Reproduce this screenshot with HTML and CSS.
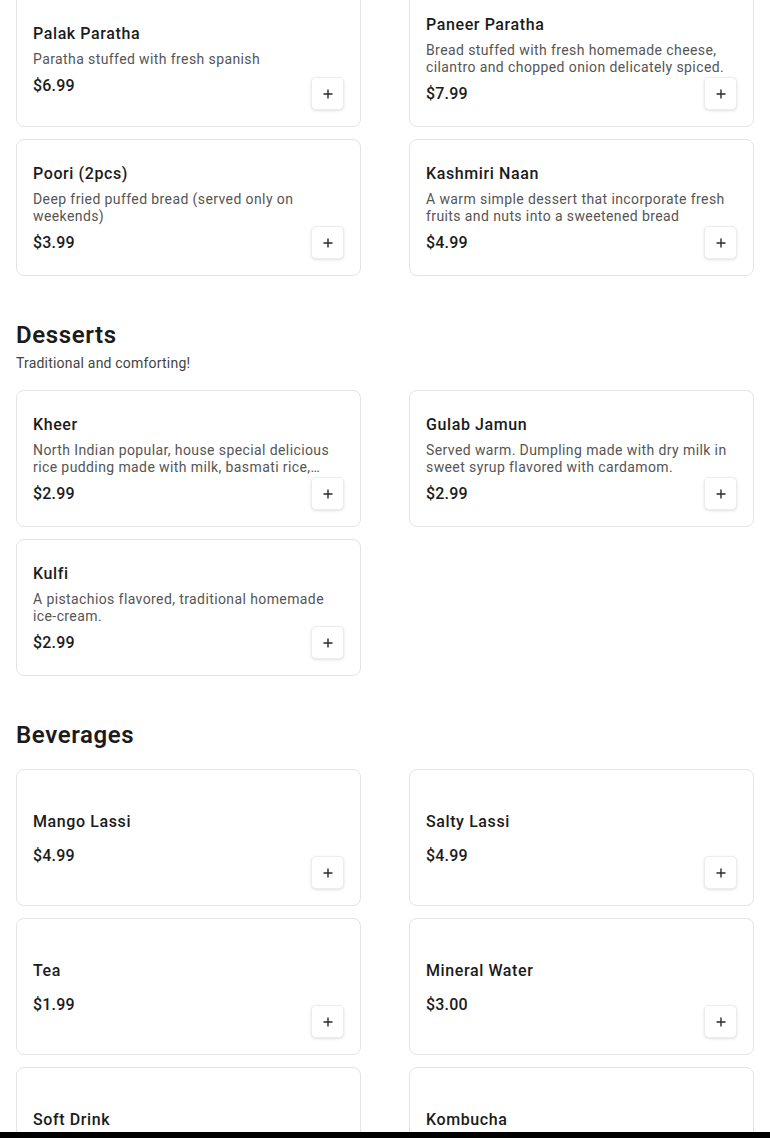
FILE: index.html
```html
<!DOCTYPE html>
<html lang="en">
<head>
<meta charset="utf-8">
<title>Menu</title>
<link rel="stylesheet" href="styles.css">
</head>
<body>
<main class="menu">
  <section class="section section-first">
    <div class="grid">
      <div class="card">
        <div class="info">
          <div class="name">Palak Paratha</div>
          <div class="desc">Paratha stuffed with fresh spanish</div>
          <div class="price">$6.99</div>
        </div>
        <button class="add" aria-label="Add"><svg viewBox="0 0 12 12" width="12" height="12"><path d="M6 1.5v9M1.5 6h9" stroke="#2a2a2a" stroke-width="1.4" fill="none"/></svg></button>
      </div>
      <div class="card">
        <div class="info">
          <div class="name">Paneer Paratha</div>
          <div class="desc">Bread stuffed with fresh homemade cheese, cilantro and chopped onion delicately spiced.</div>
          <div class="price">$7.99</div>
        </div>
        <button class="add" aria-label="Add"><svg viewBox="0 0 12 12" width="12" height="12"><path d="M6 1.5v9M1.5 6h9" stroke="#2a2a2a" stroke-width="1.4" fill="none"/></svg></button>
      </div>
      <div class="card">
        <div class="info">
          <div class="name">Poori (2pcs)</div>
          <div class="desc">Deep fried puffed bread (served only on weekends)</div>
          <div class="price">$3.99</div>
        </div>
        <button class="add" aria-label="Add"><svg viewBox="0 0 12 12" width="12" height="12"><path d="M6 1.5v9M1.5 6h9" stroke="#2a2a2a" stroke-width="1.4" fill="none"/></svg></button>
      </div>
      <div class="card">
        <div class="info">
          <div class="name">Kashmiri Naan</div>
          <div class="desc">A warm simple dessert that incorporate fresh fruits and nuts into a sweetened bread</div>
          <div class="price">$4.99</div>
        </div>
        <button class="add" aria-label="Add"><svg viewBox="0 0 12 12" width="12" height="12"><path d="M6 1.5v9M1.5 6h9" stroke="#2a2a2a" stroke-width="1.4" fill="none"/></svg></button>
      </div>
    </div>
  </section>

  <section class="section">
    <header class="section-head">
      <h2 class="section-title">Desserts</h2>
      <p class="section-sub">Traditional and comforting!</p>
    </header>
    <div class="grid">
      <div class="card">
        <div class="info">
          <div class="name">Kheer</div>
          <div class="desc">North Indian popular, house special delicious rice pudding made with milk, basmati rice, sugar, cardamom and nuts.</div>
          <div class="price">$2.99</div>
        </div>
        <button class="add" aria-label="Add"><svg viewBox="0 0 12 12" width="12" height="12"><path d="M6 1.5v9M1.5 6h9" stroke="#2a2a2a" stroke-width="1.4" fill="none"/></svg></button>
      </div>
      <div class="card">
        <div class="info">
          <div class="name">Gulab Jamun</div>
          <div class="desc">Served warm. Dumpling made with dry milk in sweet syrup flavored with cardamom.</div>
          <div class="price">$2.99</div>
        </div>
        <button class="add" aria-label="Add"><svg viewBox="0 0 12 12" width="12" height="12"><path d="M6 1.5v9M1.5 6h9" stroke="#2a2a2a" stroke-width="1.4" fill="none"/></svg></button>
      </div>
      <div class="card">
        <div class="info">
          <div class="name">Kulfi</div>
          <div class="desc">A pistachios flavored, traditional homemade ice-cream.</div>
          <div class="price">$2.99</div>
        </div>
        <button class="add" aria-label="Add"><svg viewBox="0 0 12 12" width="12" height="12"><path d="M6 1.5v9M1.5 6h9" stroke="#2a2a2a" stroke-width="1.4" fill="none"/></svg></button>
      </div>
    </div>
  </section>

  <section class="section">
    <header class="section-head">
      <h2 class="section-title">Beverages</h2>
    </header>
    <div class="grid">
      <div class="card">
        <div class="info">
          <div class="name">Mango Lassi</div>
          <div class="price">$4.99</div>
        </div>
        <button class="add" aria-label="Add"><svg viewBox="0 0 12 12" width="12" height="12"><path d="M6 1.5v9M1.5 6h9" stroke="#2a2a2a" stroke-width="1.4" fill="none"/></svg></button>
      </div>
      <div class="card">
        <div class="info">
          <div class="name">Salty Lassi</div>
          <div class="price">$4.99</div>
        </div>
        <button class="add" aria-label="Add"><svg viewBox="0 0 12 12" width="12" height="12"><path d="M6 1.5v9M1.5 6h9" stroke="#2a2a2a" stroke-width="1.4" fill="none"/></svg></button>
      </div>
      <div class="card">
        <div class="info">
          <div class="name">Tea</div>
          <div class="price">$1.99</div>
        </div>
        <button class="add" aria-label="Add"><svg viewBox="0 0 12 12" width="12" height="12"><path d="M6 1.5v9M1.5 6h9" stroke="#2a2a2a" stroke-width="1.4" fill="none"/></svg></button>
      </div>
      <div class="card">
        <div class="info">
          <div class="name">Mineral Water</div>
          <div class="price">$3.00</div>
        </div>
        <button class="add" aria-label="Add"><svg viewBox="0 0 12 12" width="12" height="12"><path d="M6 1.5v9M1.5 6h9" stroke="#2a2a2a" stroke-width="1.4" fill="none"/></svg></button>
      </div>
      <div class="card">
        <div class="info">
          <div class="name">Soft Drink</div>
          <div class="price">$1.99</div>
        </div>
        <button class="add" aria-label="Add"><svg viewBox="0 0 12 12" width="12" height="12"><path d="M6 1.5v9M1.5 6h9" stroke="#2a2a2a" stroke-width="1.4" fill="none"/></svg></button>
      </div>
      <div class="card">
        <div class="info">
          <div class="name">Kombucha</div>
          <div class="price">$4.99</div>
        </div>
        <button class="add" aria-label="Add"><svg viewBox="0 0 12 12" width="12" height="12"><path d="M6 1.5v9M1.5 6h9" stroke="#2a2a2a" stroke-width="1.4" fill="none"/></svg></button>
      </div>
    </div>
  </section>
</main>
<div class="bottom-bar"></div>
</body>
</html>
```
FILE: styles.css
```css
* { box-sizing: border-box; }
html, body { margin: 0; padding: 0; background: #fff; }
body {
  font-family: Roboto, "Liberation Sans", Arial, sans-serif;
  color: #1b1b1b;
  overflow: hidden;
}
.menu { padding: 0 16px; }
.section { padding-top: 43px; }
.section-first { padding-top: 0; margin-top: -10px; }
.section-head {
  display: flex;
  flex-direction: column;
  padding-bottom: 16px;
}
.section-title {
  margin: 0 0 2px;
  font-size: 24px;
  line-height: 32px;
  font-weight: 600;
  letter-spacing: 0.6px;
  color: #1b1b1b;
}
.section-sub {
  margin: 0;
  font-size: 14px;
  line-height: 21px;
  letter-spacing: 0.2px;
  color: #444;
}
.grid {
  display: grid;
  grid-template-columns: 345px 345px;
  column-gap: 48px;
  row-gap: 12px;
}
.card {
  display: grid;
  grid-template-areas: "stack";
  height: 137px;
  padding: 16px;
  border: 1px solid #e4e4e4;
  border-radius: 8px;
  background: #fff;
}
.info {
  grid-area: stack;
  align-self: center;
  min-width: 0;
  padding-top: 2px;
  display: flex;
  flex-direction: column;
}
.name {
  font-size: 16px;
  line-height: 22px;
  font-weight: 500;
  letter-spacing: 0.6px;
  color: #1b1b1b;
  margin-bottom: 6px;
}
.desc {
  font-size: 14px;
  line-height: 17px;
  letter-spacing: 0.4px;
  color: #555;
  margin-bottom: 7px;
  display: -webkit-box;
  -webkit-line-clamp: 2;
  -webkit-box-orient: vertical;
  overflow: hidden;
}
.price {
  font-size: 16px;
  line-height: 22px;
  font-weight: 500;
  letter-spacing: 0.2px;
  color: #1b1b1b;
}
.name + .price { margin-top: 6px; }
.add {
  grid-area: stack;
  justify-self: end;
  align-self: end;
  width: 33px;
  height: 33px;
  padding: 0;
  display: flex;
  align-items: center;
  justify-content: center;
  background: #fff;
  border: 1px solid #ededed;
  border-radius: 5px;
  box-shadow: 0 1px 3px rgba(0,0,0,0.12);
  cursor: pointer;
}
.add svg { display: block; }
.bottom-bar {
  position: fixed;
  left: 0;
  right: 0;
  bottom: 0;
  height: 6px;
  background: #000;
}
```
